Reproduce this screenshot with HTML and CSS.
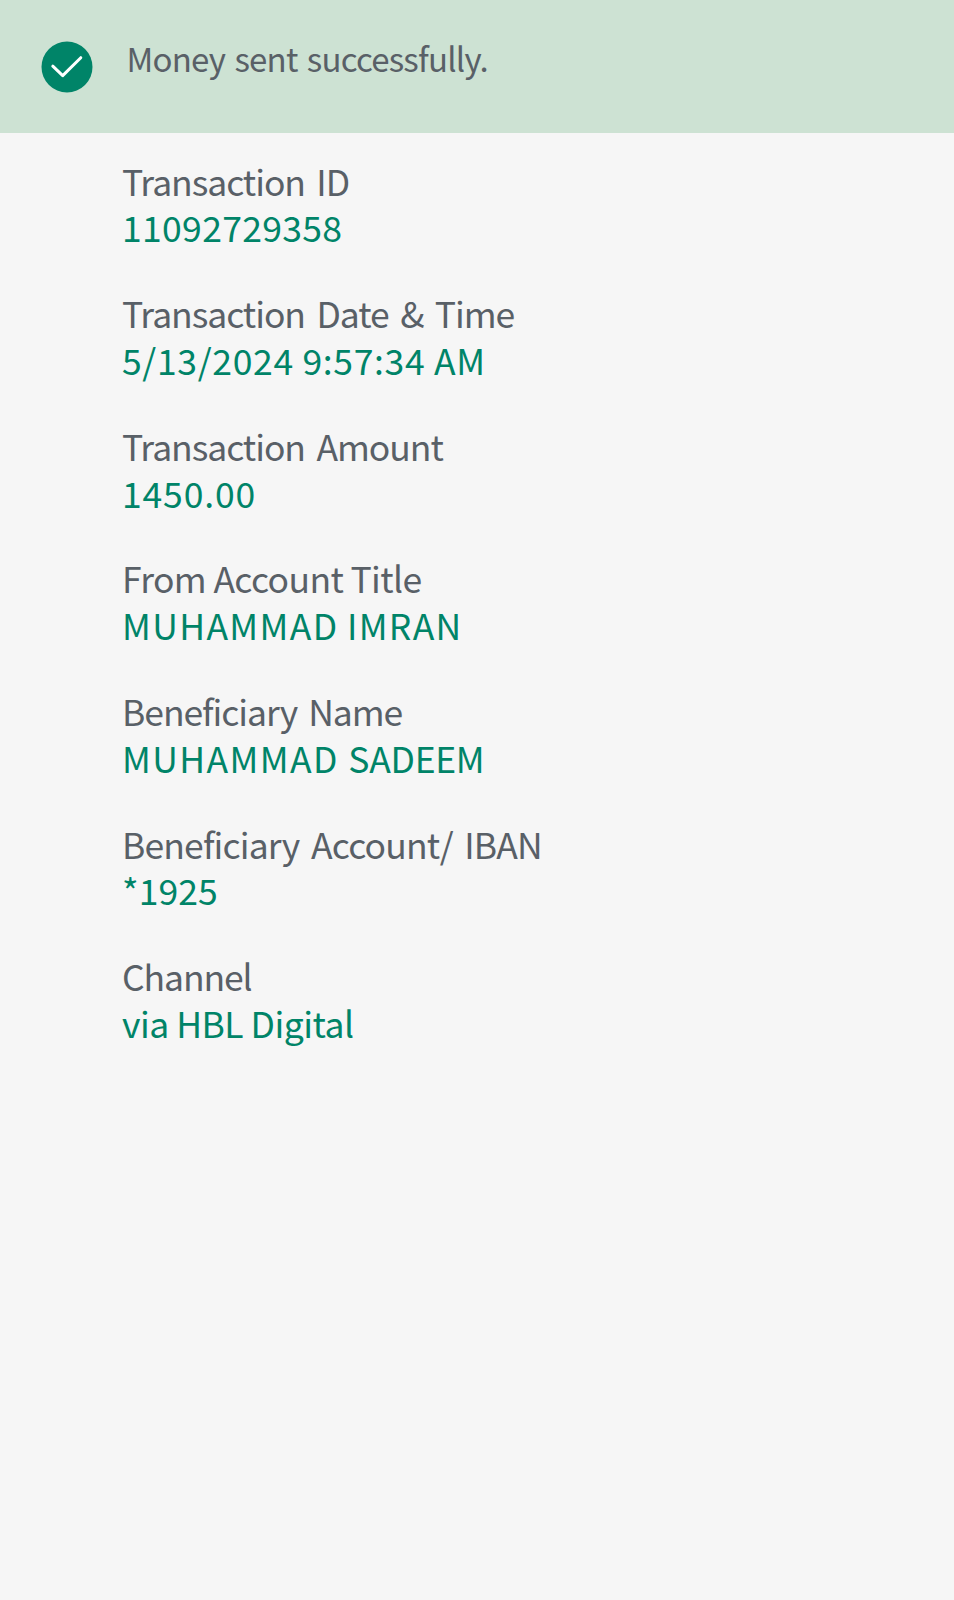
FILE: index.html
```html
<!DOCTYPE html>
<html lang="en">
<head>
<meta charset="utf-8">
<title>Money sent</title>
<link rel="stylesheet" href="styles.css">
</head>
<body>
<header class="banner">
<svg class="check" viewBox="0 0 52 52" aria-hidden="true"><circle cx="26" cy="26" r="25.5"/><path d="M11.8 25.2 21.7 34.6 39.8 16.7"/></svg>
<h1 class="message">Money sent successfully.</h1>
</header>
<dl class="details">
<div class="item id"><dt class="label">Transaction ID</dt><dd class="value">11092729358</dd></div>
<div class="item date"><dt class="label">Transaction Date &amp; Time</dt><dd class="value">5/13/2024 9:57:34 AM</dd></div>
<div class="item amount"><dt class="label">Transaction Amount</dt><dd class="value">1450.00</dd></div>
<div class="item sender"><dt class="label">From Account Title</dt><dd class="value">MUHAMMAD IMRAN</dd></div>
<div class="item beneficiary"><dt class="label">Beneficiary Name</dt><dd class="value"><span class="first-name">MUHAMMAD</span> SADEEM</dd></div>
<div class="item account"><dt class="label">Beneficiary Account/ IBAN</dt><dd class="value">*1925</dd></div>
<div class="item channel"><dt class="label">Channel</dt><dd class="value">via HBL Digital</dd></div>
</dl>
</body>
</html>
```
FILE: styles.css
```css
* { box-sizing: border-box; }
body {
  margin: 0;
  min-height: 1600px;
  background: #f6f6f6;
  font-family: "Noto Sans CJK SC", "Open Sans", sans-serif;
  color: #596067;
}
.banner {
  display: flex;
  align-items: flex-start;
  gap: 34px;
  height: 133px;
  padding: 41px 40px 0 40.5px;
  background: #cde2d3;
}
.check { flex: none; width: 52px; height: 52px; }
.check circle { fill: #008468; }
.check path { fill: none; stroke: #fff; stroke-width: 3; stroke-linecap: round; stroke-linejoin: round; }
.message {
  margin: 0;
  font-size: 33px;
  font-weight: 400;
  line-height: 35px;
  letter-spacing: -0.78px;
  word-spacing: 2.6px;
  white-space: nowrap;
}
.details { margin: 0; padding: 24.5px 0 0 122px; }
.item { height: 132.67px; }
.label, .value { margin: 0; font-size: 35.5px; line-height: 46.7px; white-space: nowrap; }
.value { color: #008468; }

/* Tracking for each line */
.id .label { letter-spacing: -1.05px; word-spacing: 4.5px; }
.id .value { letter-spacing: 0.33px; }
.date .label { letter-spacing: -1.05px; word-spacing: 4.6px; }
.date .value { letter-spacing: 0.67px; }
.amount .label { letter-spacing: -1.05px; word-spacing: 4.6px; }
.amount .value { letter-spacing: 0.85px; }
.sender .label { letter-spacing: -0.63px; }
.sender .value { letter-spacing: 1.38px; word-spacing: -1px; }
.beneficiary .label { letter-spacing: -1.05px; word-spacing: 4.1px; }
.beneficiary .value { letter-spacing: -0.3px; word-spacing: 2px; }
.beneficiary .first-name { letter-spacing: 1.4px; }
.account .label { letter-spacing: -0.85px; word-spacing: 4.5px; }
.account .value { letter-spacing: 0.1px; }
.channel .label { letter-spacing: -1.1px; }
.channel .value { letter-spacing: -0.51px; }
```
